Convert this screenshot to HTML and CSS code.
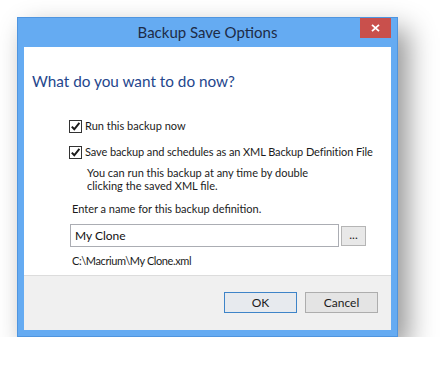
FILE: index.html
```html
<!DOCTYPE html>
<html>
<head>
<meta charset="utf-8">
<link rel="stylesheet" href="styles.css">
</head>
<body>
<div class="page">
  <div class="window">
    <div class="titlebar">
      <div></div>
      <div class="title">Backup Save Options</div>
      <div class="controls">
        <div class="close">
          <svg width="9" height="8" viewBox="0 0 9 8"><path d="M1 0.8 L8 7.2 M8 0.8 L1 7.2" stroke="#ffffff" stroke-width="1.8" fill="none"/></svg>
        </div>
      </div>
    </div>
    <div class="client">
      <div class="main">
        <div class="heading">What do you want to do now?</div>
        <div class="options">
          <label class="check-row first">
            <span class="box"><svg width="11" height="11" viewBox="0 0 11 11"><path d="M1.8 5.6 L4.3 8.3 L9.4 1.9" stroke="#1a1a1a" stroke-width="2" fill="none"/></svg></span>
            <span>Run this backup now</span>
          </label>
          <label class="check-row second">
            <span class="box"><svg width="11" height="11" viewBox="0 0 11 11"><path d="M1.8 5.6 L4.3 8.3 L9.4 1.9" stroke="#1a1a1a" stroke-width="2" fill="none"/></svg></span>
            <span class="long">Save backup and schedules as an XML Backup Definition File</span>
          </label>
          <div class="desc">You can run this backup at any time by double<br>clicking the saved XML file.</div>
        </div>
        <div class="prompt">Enter a name for this backup definition.</div>
        <div class="name-row">
          <div class="input">My Clone</div>
          <div class="browse">...</div>
        </div>
        <div class="path">C:\Macrium\My Clone.xml</div>
      </div>
      <div class="footer">
        <div class="btn default">OK</div>
        <div class="btn">Cancel</div>
      </div>
    </div>
  </div>
</div>
</body>
</html>
```

FILE: styles.css
```css
html, body {
  margin: 0;
  padding: 0;
  background: #ffffff;
}
body {
  font-family: Lato, "Noto Sans", sans-serif;
  font-size: 11px;
  color: #1b1b1b;
  white-space: nowrap;
}
.page {
  padding: 17px 0 0 17px;
}
.window {
  width: 381px;
  height: 320px;
  box-sizing: border-box;
  border: 1px solid #4f95df;
  background: #65abf2;
  padding: 0 6px 6px 6px;
  display: flex;
  flex-direction: column;
  box-shadow: 10px 12px 26px rgba(0, 0, 0, 0.42);
}
.titlebar {
  height: 29px;
  display: grid;
  grid-template-columns: 1fr auto 1fr;
  align-items: start;
}
.title {
  font-size: 15px;
  line-height: 20px;
  padding-top: 4px;
  color: #1d2c47;
}
.controls {
  display: flex;
  justify-content: flex-end;
}
.close {
  width: 31px;
  height: 20px;
  background: #c9504c;
  display: flex;
  align-items: center;
  justify-content: center;
}
.client {
  flex: 1;
  display: flex;
  flex-direction: column;
}
.main {
  height: 229px;
  box-sizing: border-box;
  background: #ffffff;
  border-bottom: 1px solid #dcdcdc;
  padding-top: 24px;
  display: flex;
  flex-direction: column;
}
.heading {
  margin-left: 8px;
  font-size: 15.3px;
  line-height: 20px;
  color: #24468c;
}
.options {
  margin-left: 45px;
  margin-top: 27px;
}
.check-row {
  display: flex;
  align-items: center;
  gap: 3px;
  height: 16px;
  line-height: 16px;
}
.check-row.second {
  margin-top: 10px;
}
.long {
  letter-spacing: -0.1px;
}
.box {
  width: 11px;
  height: 11px;
  border: 1px solid #333333;
  background: #ffffff;
  display: flex;
}
.desc {
  margin-left: 18px;
  margin-top: 6px;
  line-height: 13px;
}
.prompt {
  margin-left: 48px;
  margin-top: 9px;
  line-height: 16px;
}
.name-row {
  margin-left: 46px;
  margin-top: 7px;
  display: flex;
  align-items: center;
  gap: 2px;
}
.input {
  width: 269px;
  height: 23px;
  box-sizing: border-box;
  border: 1px solid #abadb3;
  padding-left: 4px;
  line-height: 21px;
  font-size: 12px;
  color: #111111;
}
.browse {
  width: 25px;
  height: 20px;
  box-sizing: border-box;
  border: 1px solid #b5b5b5;
  background: #e8e8e8;
  text-align: center;
  line-height: 16px;
  font-size: 12px;
  color: #222222;
}
.path {
  margin-left: 48px;
  margin-top: 6px;
  line-height: 16px;
  letter-spacing: -0.4px;
}
.footer {
  flex: 1;
  background: #f0f0f0;
  display: flex;
  justify-content: flex-end;
  align-items: flex-start;
  gap: 8px;
  padding: 16px 13px 0 0;
}
.btn {
  width: 73px;
  height: 21px;
  box-sizing: border-box;
  border: 1px solid #adadad;
  background: #e4e4e4;
  text-align: center;
  line-height: 19px;
  font-size: 12px;
  color: #1b1b1b;
}
.btn.default {
  border-color: #3e84c8;
  background: #e7eaee;
}
```
